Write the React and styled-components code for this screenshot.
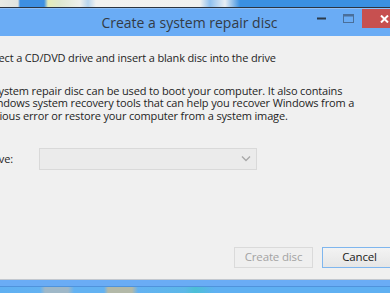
import React from 'react'
import { styled, createGlobalStyle } from 'styled-components'

const GlobalStyle = createGlobalStyle`
  html, body {
    margin: 0;
    padding: 0;
    background: #2e8ee0;
    overflow: hidden;
  }
`

const Desktop = styled.div`
  width: 390px;
  height: 293px;
  overflow: hidden;
  display: flex;
  flex-direction: column;
  font-family: 'Open Sans', 'Noto Sans', sans-serif;
`

const Wallpaper = styled.div`
  flex: 0 0 ${(p) => p.h}px;
  background: ${(p) => p.bg};
  border-bottom: ${(p) => (p.line ? `1px solid ${p.line}` : 'none')};
`

const Window = styled.div`
  display: flex;
  flex-direction: column;
  margin: 0 -24px 0 -30px;
  background: #6aacf5;
`

const TitleBar = styled.div`
  height: 28px;
  display: flex;
  align-items: flex-start;
  padding-right: 7px;
  background: #6aacf5;
  border-top: 1px solid #8fc0f7;
  box-sizing: border-box;
`

const Title = styled.div`
  flex: 1;
  height: 27px;
  line-height: 27px;
  padding-left: 101px;
  text-align: center;
  font-size: 14px;
  color: #333b45;
`

const CaptionButton = styled.div`
  width: ${(p) => p.w}px;
  height: 19px;
  display: flex;
  align-items: center;
  justify-content: center;
  background: ${(p) => p.bg || 'transparent'};
`

const Content = styled.div`
  background: #f0f0f0;
  padding: 16px 17px 11px 14px;
  border-bottom: 1px solid #c3c8cf;
  color: #1e1e1e;
  font-size: 11px;
  line-height: 12.5px;
  letter-spacing: -0.15px;
  display: flex;
  flex-direction: column;
`

const Lead = styled.p`
  margin: 0;
`

const Para = styled.p`
  margin: 20px 0 0;
  width: 384px;
`

const DriveRow = styled.div`
  display: flex;
  align-items: center;
  margin-top: 26px;
`

const Label = styled.span`
  width: 55px;
`

const Combo = styled.div`
  width: 218px;
  height: 22px;
  box-sizing: border-box;
  border: 1px solid #d9d9d9;
  background: #ebebeb;
  display: flex;
  align-items: center;
  justify-content: flex-end;
  padding-right: 5px;
`

const Buttons = styled.div`
  display: flex;
  justify-content: flex-end;
  gap: 9px;
  margin-top: 77px;
`

const Button = styled.div`
  width: ${(p) => p.w}px;
  height: 21px;
  box-sizing: border-box;
  display: flex;
  align-items: center;
  justify-content: center;
  font-size: 11.5px;
  border: 1px solid ${(p) => (p.disabled ? '#dadada' : '#7fb6ee')};
  background: ${(p) => (p.disabled ? '#efefef' : 'linear-gradient(#f3f3f3, #e6e6e6)')};
  color: ${(p) => (p.disabled ? '#a3a3a3' : '#1a1a1a')};
`

const Frame = styled.div`
  height: 6px;
  background: #6aacf5;
  border-bottom: 1px solid #4f93dc;
`

export default function App() {
  return (
    <>
      <GlobalStyle />
      <Desktop>
        <Wallpaper
          h={7}
          line="#2b3440"
          bg="linear-gradient(90deg, #e9ebe4 0px, #dfe3e0 18px, #3d8fe2 20px, #3d8fe2 44px, #e6ecb8 48px, #dfe8d0 60px, #eef0ec 80px, #b9d6ee 88px, #f2f2f0 96px, #f0f1ef 200px, #8fc0ee 210px, #e9eef3 225px, #3a90e2 240px, #3a90e2 390px)"
        />
        <Window>
          <TitleBar>
            <Title>Create a system repair disc</Title>
            <CaptionButton w={27}>
              <svg width="10" height="3" viewBox="0 0 10 3">
                <rect x="0" y="0.5" width="9" height="2" fill="#2b3a4b" />
              </svg>
            </CaptionButton>
            <CaptionButton w={27}>
              <svg width="12" height="10" viewBox="0 0 12 10">
                <rect x="0.5" y="0.5" width="10" height="8" fill="none" stroke="#4a6f9a" strokeWidth="1" />
                <rect x="0.5" y="0.5" width="10" height="2" fill="#4a6f9a" />
              </svg>
            </CaptionButton>
            <CaptionButton w={45} bg="#c75050">
              <svg width="9" height="8" viewBox="0 0 9 8">
                <path d="M1 0.5 L8 7.5 M8 0.5 L1 7.5" stroke="#ffffff" strokeWidth="2" />
              </svg>
            </CaptionButton>
          </TitleBar>
          <Content>
            <Lead>Select a CD/DVD drive and insert a blank disc into the drive</Lead>
            <Para>
              A system repair disc can be used to boot your computer. It also contains
              Windows system recovery tools that can help you recover Windows from a
              serious error or restore your computer from a system image.
            </Para>
            <DriveRow>
              <Label>Drive:</Label>
              <Combo>
                <svg width="10" height="6" viewBox="0 0 10 6">
                  <path d="M1 0.5 L5 4.5 L9 0.5" fill="none" stroke="#a9a9a9" strokeWidth="1.4" />
                </svg>
              </Combo>
            </DriveRow>
            <Buttons>
              <Button w={79} disabled>Create disc</Button>
              <Button w={75}>Cancel</Button>
            </Buttons>
          </Content>
          <Frame />
        </Window>
        <Wallpaper
          h={7}
          line="#1c2a3a"
          bg="linear-gradient(90deg, #5fb0f2 0px, #63b2f2 40px, #9fb8c8 45px, #9fb8c8 68px, #63b2f2 74px, #63b2f2 104px, #b3b9a8 108px, #b3b9a8 132px, #63b2f2 138px, #5cb8e8 185px, #4bc0d6 195px, #5fb0f2 215px, #5fb0f2 390px)"
        />
      </Desktop>
    </>
  )
}
